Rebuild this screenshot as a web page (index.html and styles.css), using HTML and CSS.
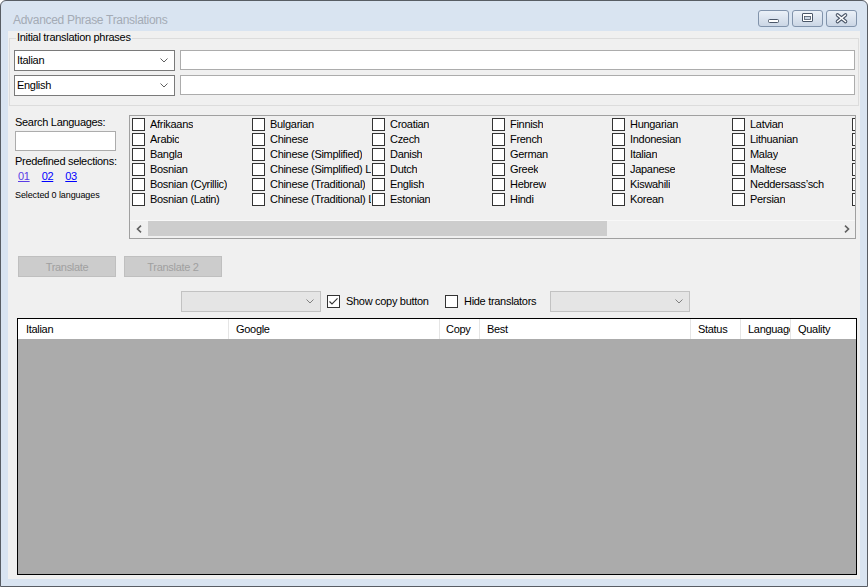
FILE: index.html
```html
<!DOCTYPE html>
<html>
<head>
<meta charset="utf-8">
<title>Advanced Phrase Translations</title>
<link rel="stylesheet" href="styles.css">
</head>
<body>
<div class="window">
  <div class="titlebar">
    <span class="title">Advanced Phrase Translations</span>
    <div class="caption">
      <div class="cbtn"><svg width="29" height="15" viewBox="0 0 29 15"><rect x="9.5" y="8.5" width="10" height="3" rx="1" fill="#fff" stroke="#4a5668"/></svg></div>
      <div class="cbtn"><svg width="29" height="15" viewBox="0 0 29 15"><rect x="9.5" y="2.5" width="10" height="8" rx="0.5" fill="#fff" stroke="#4a5668"/><rect x="11.5" y="5.5" width="6" height="3" fill="#cbd6e4" stroke="#4a5668" stroke-width="0.8"/></svg></div>
      <div class="cbtn"><svg width="29" height="15" viewBox="0 0 29 15"><g stroke="#4a5668" stroke-width="3.6" stroke-linecap="round"><line x1="10.5" y1="4" x2="18.5" y2="10.5"/><line x1="18.5" y1="4" x2="10.5" y2="10.5"/></g><g stroke="#fff" stroke-width="1.6" stroke-linecap="round"><line x1="10.5" y1="4" x2="18.5" y2="10.5"/><line x1="18.5" y1="4" x2="10.5" y2="10.5"/></g></svg></div>
    </div>
  </div>
  <div class="client">
    <div class="group">
      <span class="legend">Initial translation phrases</span>
      <div class="grow">
        <div class="combo"><span class="ctext">Italian</span><svg class="chev" width="8" height="5" viewBox="0 0 8 5"><polyline points="0.5,0.5 4,4 7.5,0.5" fill="none" stroke="#606060" stroke-width="1"/></svg></div>
        <div class="textbox wide"></div>
      </div>
      <div class="grow second">
        <div class="combo"><span class="ctext">English</span><svg class="chev" width="8" height="5" viewBox="0 0 8 5"><polyline points="0.5,0.5 4,4 7.5,0.5" fill="none" stroke="#606060" stroke-width="1"/></svg></div>
        <div class="textbox wide"></div>
      </div>
    </div>

    <div class="lower">
      <div class="side">
        <div class="lbl first">Search Languages:</div>
        <div class="textbox search"></div>
        <div class="lbl pre">Predefined selections:</div>
        <div class="links"><a class="link visited">01</a><a class="link">02</a><a class="link">03</a></div>
        <div class="small">Selected 0 languages</div>
      </div>
      <div class="panel">
        <div class="langs">
          <div class="item"><span class="cb"></span><span class="ltxt">Afrikaans</span></div>
          <div class="item"><span class="cb"></span><span class="ltxt">Arabic</span></div>
          <div class="item"><span class="cb"></span><span class="ltxt">Bangla</span></div>
          <div class="item"><span class="cb"></span><span class="ltxt">Bosnian</span></div>
          <div class="item"><span class="cb"></span><span class="ltxt">Bosnian (Cyrillic)</span></div>
          <div class="item"><span class="cb"></span><span class="ltxt">Bosnian (Latin)</span></div>

          <div class="item"><span class="cb"></span><span class="ltxt">Bulgarian</span></div>
          <div class="item"><span class="cb"></span><span class="ltxt">Chinese</span></div>
          <div class="item"><span class="cb"></span><span class="ltxt">Chinese (Simplified)</span></div>
          <div class="item"><span class="cb"></span><span class="ltxt">Chinese (Simplified) Legacy</span></div>
          <div class="item"><span class="cb"></span><span class="ltxt">Chinese (Traditional)</span></div>
          <div class="item"><span class="cb"></span><span class="ltxt">Chinese (Traditional) Legacy</span></div>

          <div class="item"><span class="cb"></span><span class="ltxt">Croatian</span></div>
          <div class="item"><span class="cb"></span><span class="ltxt">Czech</span></div>
          <div class="item"><span class="cb"></span><span class="ltxt">Danish</span></div>
          <div class="item"><span class="cb"></span><span class="ltxt">Dutch</span></div>
          <div class="item"><span class="cb"></span><span class="ltxt">English</span></div>
          <div class="item"><span class="cb"></span><span class="ltxt">Estonian</span></div>

          <div class="item"><span class="cb"></span><span class="ltxt">Finnish</span></div>
          <div class="item"><span class="cb"></span><span class="ltxt">French</span></div>
          <div class="item"><span class="cb"></span><span class="ltxt">German</span></div>
          <div class="item"><span class="cb"></span><span class="ltxt">Greek</span></div>
          <div class="item"><span class="cb"></span><span class="ltxt">Hebrew</span></div>
          <div class="item"><span class="cb"></span><span class="ltxt">Hindi</span></div>

          <div class="item"><span class="cb"></span><span class="ltxt">Hungarian</span></div>
          <div class="item"><span class="cb"></span><span class="ltxt">Indonesian</span></div>
          <div class="item"><span class="cb"></span><span class="ltxt">Italian</span></div>
          <div class="item"><span class="cb"></span><span class="ltxt">Japanese</span></div>
          <div class="item"><span class="cb"></span><span class="ltxt">Kiswahili</span></div>
          <div class="item"><span class="cb"></span><span class="ltxt">Korean</span></div>

          <div class="item"><span class="cb"></span><span class="ltxt">Latvian</span></div>
          <div class="item"><span class="cb"></span><span class="ltxt">Lithuanian</span></div>
          <div class="item"><span class="cb"></span><span class="ltxt">Malay</span></div>
          <div class="item"><span class="cb"></span><span class="ltxt">Maltese</span></div>
          <div class="item"><span class="cb"></span><span class="ltxt">Neddersass’sch</span></div>
          <div class="item"><span class="cb"></span><span class="ltxt">Persian</span></div>

          <div class="item"><span class="cb"></span></div>
          <div class="item"><span class="cb"></span></div>
          <div class="item"><span class="cb"></span></div>
          <div class="item"><span class="cb"></span></div>
          <div class="item"><span class="cb"></span></div>
          <div class="item"><span class="cb"></span></div>
        </div>
        <div class="hscroll">
          <div class="sarrow"><svg width="6" height="8" viewBox="0 0 6 8"><polyline points="5,0.7 1.5,4 5,7.3" fill="none" stroke="#606060" stroke-width="1.6"/></svg></div>
          <div class="track"><div class="thumb"></div></div>
          <div class="sarrow"><svg width="6" height="8" viewBox="0 0 6 8"><polyline points="1,0.7 4.5,4 1,7.3" fill="none" stroke="#606060" stroke-width="1.6"/></svg></div>
        </div>
      </div>
    </div>

    <div class="buttons">
      <div class="btn">Translate</div>
      <div class="btn">Translate 2</div>
    </div>

    <div class="tools">
      <div class="combo disabled"><span class="ctext"></span><svg class="chev" width="8" height="5" viewBox="0 0 8 5"><polyline points="0.5,0.5 4,4 7.5,0.5" fill="none" stroke="#808080" stroke-width="1"/></svg></div>
      <span class="cb tcb first-cb"><svg width="11" height="11" viewBox="0 0 11 11"><polyline points="1.5,5.5 4,8 9.5,2.3" fill="none" stroke="#333" stroke-width="1.1"/></svg></span>
      <span class="tlabel l1">Show copy button</span>
      <span class="cb tcb"></span>
      <span class="tlabel l2">Hide translators</span>
      <div class="combo disabled"><span class="ctext"></span><svg class="chev" width="8" height="5" viewBox="0 0 8 5"><polyline points="0.5,0.5 4,4 7.5,0.5" fill="none" stroke="#808080" stroke-width="1"/></svg></div>
    </div>

    <div class="grid">
      <div class="ghead">
        <div class="hc c1">Italian</div>
        <div class="hc c2">Google</div>
        <div class="hc c3">Copy</div>
        <div class="hc c4">Best</div>
        <div class="hc c5">Status</div>
        <div class="hc c6">Language</div>
        <div class="hc c7">Quality</div>
      </div>
      <div class="gbody"></div>
    </div>
  </div>
</div>
</body>
</html>
```

FILE: styles.css
```css
* { box-sizing: border-box; }
html, body { margin: 0; padding: 0; }
body {
  width: 868px;
  height: 587px;
  overflow: hidden;
  background: #ffffff;
  font-family: "Liberation Sans", Arial, sans-serif;
  font-size: 11px;
  letter-spacing: -0.3px;
  color: #000;
}

.window {
  width: 868px;
  height: 587px;
  border: 1px solid #585d64;
  border-radius: 6px 6px 0 0;
  background: #d9e4f1;
  padding: 0 7px 7px 7px;
  display: flex;
  flex-direction: column;
}

.titlebar {
  height: 30px;
  flex: none;
  display: flex;
  align-items: flex-start;
  justify-content: space-between;
}
.title {
  margin: 12px 0 0 5px;
  font-size: 12px;
  line-height: 14px;
  color: #a4abb5;
}
.caption {
  display: flex;
  gap: 3px;
  margin: 9px 3px 0 0;
}
.cbtn {
  width: 31px;
  height: 17px;
  border: 1px solid #8193ab;
  border-radius: 3px;
  background: linear-gradient(#ebf1f8, #cbd6e5);
  display: flex;
}
.cbtn svg { display: block; }

.client {
  flex: 1;
  background: #f0f0f0;
  display: flex;
  flex-direction: column;
}

/* group box */
.group {
  position: relative;
  margin: 7px 1px 0 1px;
  height: 68px;
  border: 1px solid #dcdcdc;
  padding: 11px 3px 0 4px;
  flex: none;
}
.legend {
  position: absolute;
  top: -8px;
  left: 6px;
  padding: 0 1px;
  line-height: 13px;
  background: #f0f0f0;
}
.grow {
  display: flex;
  align-items: flex-start;
  gap: 5px;
}
.grow.second { margin-top: 4px; }

.combo {
  width: 161px;
  height: 21px;
  flex: none;
  border: 1px solid #7a7a7a;
  background: #fff;
  display: flex;
  align-items: center;
  justify-content: space-between;
  padding: 0 6px 0 2px;
}
.ctext { line-height: 13px; }
.chev { display: block; }
.combo.disabled {
  width: 140px;
  background: #e5e5e5;
  border-color: #c2c2c2;
}

.textbox {
  height: 20px;
  border: 1px solid #acacac;
  background: #fff;
}
.textbox.wide { flex: 1; }

/* lower area */
.lower {
  display: flex;
  margin-top: 9px;
  flex: none;
}
.side {
  width: 121px;
  padding-left: 7px;
}
.lbl { line-height: 13px; white-space: nowrap; }
.lbl.first { margin-top: 1px; }
.textbox.search { width: 101px; margin-top: 2px; }
.lbl.pre { margin-top: 4px; }
.links {
  display: flex;
  gap: 12px;
  padding-left: 3px;
  margin-top: 2px;
  line-height: 13px;
}
.link { color: #0000ff; text-decoration: underline; }
.link.visited { color: #5a3ce6; }
.small {
  margin-top: 7px;
  font-size: 9px;
  line-height: 11px;
  letter-spacing: -0.1px;
}

.panel {
  width: 727px;
  height: 124px;
  border: 1px solid #a0a0a0;
  display: flex;
  flex-direction: column;
}
.langs {
  height: 104px;
  flex: none;
  overflow: hidden;
  padding: 1px 0 0 1px;
  display: grid;
  grid-auto-flow: column;
  grid-template-rows: repeat(6, 15px);
  grid-auto-columns: 120px;
  align-content: start;
}
.item {
  display: flex;
  align-items: center;
  padding-left: 1px;
  overflow: hidden;
  min-width: 0;
}
.cb {
  width: 13px;
  height: 13px;
  flex: none;
  border: 1px solid #333;
  background: #fff;
  display: block;
}
.cb svg { display: block; }
.ltxt {
  margin-left: 5px;
  white-space: nowrap;
  overflow: hidden;
  line-height: 15px;
}

.hscroll {
  height: 17px;
  flex: none;
  display: flex;
  border-top: 1px solid #f8f8f8;
}
.sarrow {
  width: 17px;
  flex: none;
  display: flex;
  align-items: center;
  justify-content: center;
}
.track {
  flex: 1;
  padding: 0 0 1px 1px;
}
.thumb {
  width: 459px;
  height: 15px;
  background: #cdcdcd;
}

/* buttons */
.buttons {
  display: flex;
  gap: 8px;
  margin-top: 17px;
  padding-left: 10px;
  flex: none;
}
.btn {
  width: 98px;
  height: 21px;
  border: 1px solid #bfbfbf;
  background: #cccccc;
  color: #a0a0a0;
  display: flex;
  align-items: center;
  justify-content: center;
}

/* tools row */
.tools {
  display: flex;
  align-items: center;
  margin-top: 14px;
  padding-left: 173px;
  height: 21px;
  flex: none;
}
.tcb { margin-right: 6px; }
.tcb.first-cb { margin-left: 6px; }
.tlabel { white-space: nowrap; line-height: 13px; }
.tlabel.l1 { width: 99px; }
.tlabel.l2 { width: 86px; }

/* data grid */
.grid {
  margin: 6px 0 0 9px;
  width: 840px;
  height: 257px;
  border: 1px solid #000;
  display: flex;
  flex-direction: column;
  flex: none;
}
.ghead {
  height: 20px;
  background: #fff;
  display: flex;
  flex: none;
}
.hc {
  height: 20px;
  line-height: 20px;
  padding-left: 7px;
  border-right: 1px solid #e5e5e5;
  white-space: nowrap;
  overflow: hidden;
  flex: none;
}
.hc.c1 { width: 211px; padding-left: 8px; }
.hc.c2 { width: 211px; }
.hc.c3 { width: 40px; padding-left: 6px; }
.hc.c4 { width: 211px; }
.hc.c5 { width: 50px; }
.hc.c6 { width: 50px; }
.hc.c7 { flex: 1; border-right: none; }
.gbody {
  flex: 1;
  background: #ababab;
}
```
